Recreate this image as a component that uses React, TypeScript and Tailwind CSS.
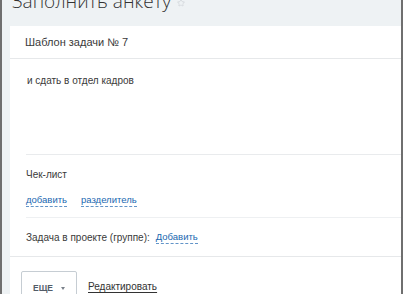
import { Star } from 'lucide-react';

const DashedLink = ({ children }: { children: string }) => (
  <span className="inline-block text-[#2067b0] border-b border-dashed border-[#2067b0]/70 leading-[12px] cursor-pointer">
    {children}
  </span>
);

const App = () => {
  return (
    <div className="w-[403px] h-[294px] overflow-hidden bg-[#eef2f4] border-l-2 border-r-2 border-[#6f6f6f] font-['Liberation_Sans',Arial,sans-serif] text-[#535c69]">
      <div className="h-[26px] pl-[10px] overflow-hidden">
        <div className="flex items-start -mt-[11px]">
          <h1 className="font-['Open_Sans',sans-serif] font-light text-[19px] leading-[24px] text-[#333]">
            Заполнить анкету
          </h1>
          <Star className="ml-[6px] mt-[10px] w-[8px] h-[8px] text-[#c3c7cc]" strokeWidth={1.5} />
        </div>
      </div>

      <div className="ml-[8px] bg-white h-full">
        <div className="h-[33px] flex items-center pl-[15px] border-b border-[#e6e8ea] text-[11px] text-[#3a3a3a]">
          Шаблон задачи № 7
        </div>

        <div className="h-[95px] pl-[17px] pt-[14px] text-[10px] text-[#3a3a3a]">
          и сдать в отдел кадров
        </div>

        <div className="ml-[16px] border-t border-[#e9ebed] h-[63px]">
          <div className="pt-[13px] text-[10px] text-[#3a3a3a] leading-[13px]">Чек-лист</div>
          <div className="pt-[13px] flex items-start gap-[14px] text-[9.5px]">
            <DashedLink>добавить</DashedLink>
            <DashedLink>разделитель</DashedLink>
          </div>
        </div>

        <div className="ml-[16px] border-t border-[#eef0f2] h-[39px] flex items-center text-[10px] text-[#3a3a3a]">
          <span>Задача в проекте (группе):</span>
          <span className="ml-[6px] text-[9.5px] flex">
            <DashedLink>Добавить</DashedLink>
          </span>
        </div>

        <div className="border-t border-[#e6e8ea] pt-[14px] pl-[11px] flex items-start">
          <button className="w-[56px] h-[34px] border border-[#c6cdd3] rounded-[2px] flex items-center justify-center gap-[8px] text-[8.5px] font-bold text-[#535c69]">
            ЕЩЕ
            <span className="w-0 h-0 border-l-[2.5px] border-r-[2.5px] border-t-[3px] border-l-transparent border-r-transparent border-t-[#7a818a]" />
          </button>
          <span className="ml-[11px] mt-[8px] text-[10px] text-[#333] underline underline-offset-2">
            Редактировать
          </span>
        </div>
      </div>
    </div>
  );
};

export default App;
